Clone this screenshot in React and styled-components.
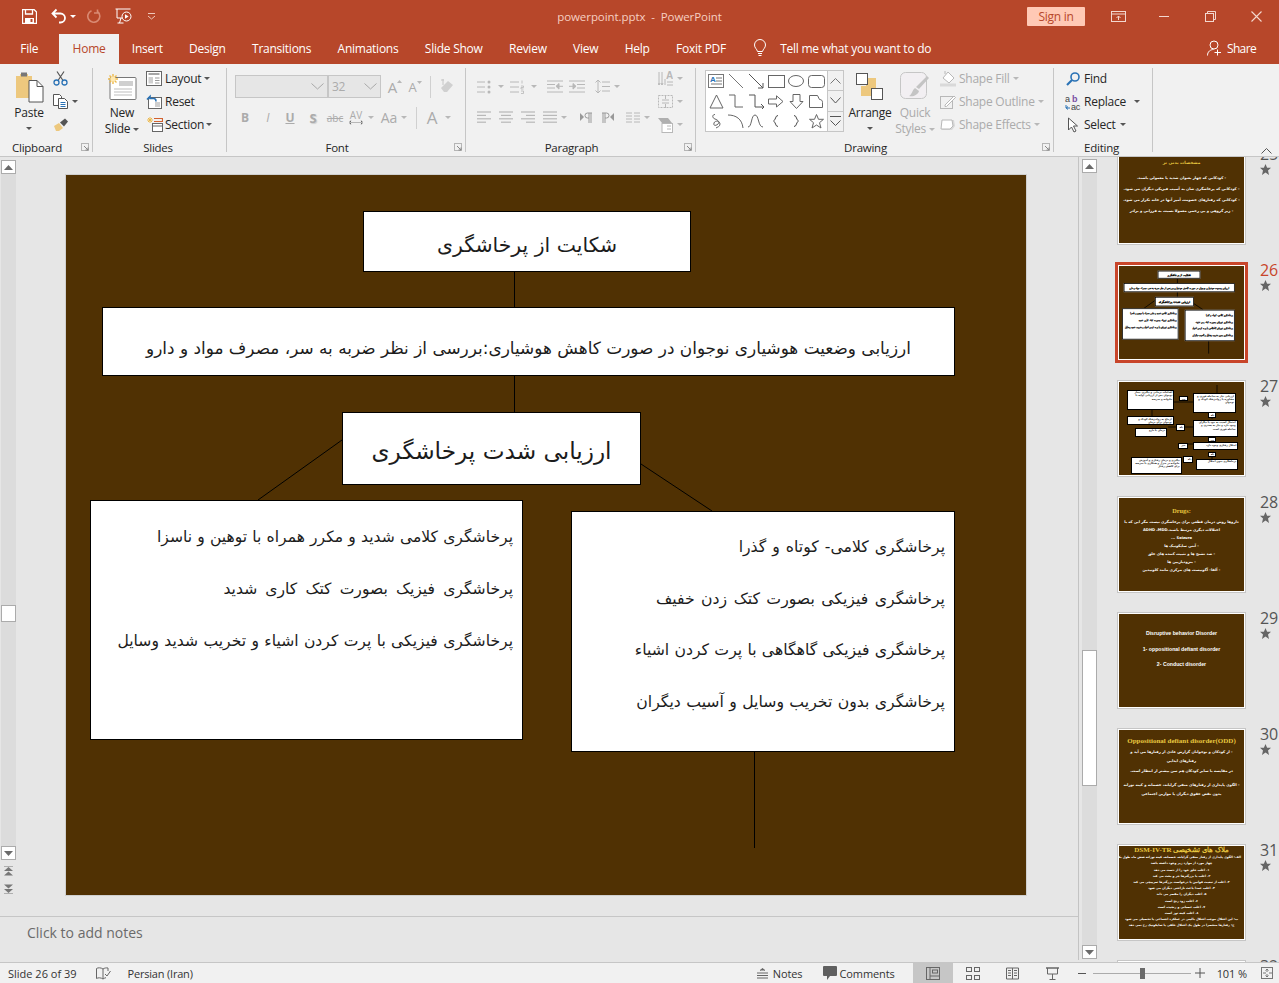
import React from "react";
import styled, { createGlobalStyle } from "styled-components";

const UI = '"Open Sans","Noto Sans",sans-serif';
const FA = '"DejaVu Sans",sans-serif';
const ACCENT = "#B7472A";
const DIS = "#ABABAB";

const Global = createGlobalStyle`
  html,body{margin:0;padding:0;background:#e6e6e6;}
  *{box-sizing:border-box;}
`;

const Window = styled.div`
  width:1279px;height:983px;display:flex;flex-direction:column;overflow:hidden;
  font-family:${UI};font-size:11.5px;color:#262626;letter-spacing:-.25px;
`;
const TitleBar = styled.header`
  height:32px;background:${ACCENT};display:grid;grid-template-columns:1fr auto 1fr;align-items:center;color:#fff;
`;
const Qat = styled.div`display:flex;align-items:center;padding-left:22px;`;
const Caption = styled.div`font-size:11.5px;color:#F6CFC2;white-space:pre;letter-spacing:-.07px;`;
const WinControls = styled.div`display:flex;align-items:center;justify-content:flex-end;padding-right:17px;`;
const SignIn = styled.div`
  width:58px;height:19px;background:#FFC9B5;color:${ACCENT};border-radius:1px;display:flex;align-items:center;justify-content:center;
  font-size:12px;margin-right:26px;
`;
const TabBar = styled.nav`height:32px;background:${ACCENT};display:flex;align-items:flex-end;padding-left:7px;color:#fff;`;
const Tab = styled.div`
  height:30px;padding:0 13.2px 2px;display:flex;align-items:center;white-space:nowrap;font-size:12px;
  ${p=>p.$active?`background:#F1F1F1;color:${ACCENT};`:""}
  &:first-child{margin-right:8px;}
`;
const TellMe = styled.div`display:flex;align-items:center;gap:13px;height:30px;padding:0 0 2px 14px;font-size:12px;`;
const Share = styled.div`margin-left:auto;display:flex;align-items:center;gap:5px;height:30px;padding:0 23px 2px 0;font-size:12px;letter-spacing:-.65px;`;

const Ribbon = styled.section`height:93px;background:#F1F1F1;border-bottom:1px solid #C6C6C6;display:flex;`;
const Group = styled.div`
  width:${p=>p.$w}px;height:84px;margin-top:4px;border-right:1px solid #C6C6C6;display:flex;flex-direction:column;flex:none;
`;
const GroupBody = styled.div`flex:1;display:flex;min-height:0;padding-left:${p=>p.$pl||0}px;`;
const GroupFoot = styled.div`
  height:16px;display:flex;align-items:center;font-size:11.5px;padding-right:3px;margin-bottom:-3px;
`;
const GroupLabel = styled.span`flex:1;text-align:center;`;
const Launcher = styled.span`width:15px;display:flex;justify-content:flex-end;`;
const Big = styled.div`
  width:${p=>p.$w}px;margin-left:${p=>p.$ml||0}px;display:flex;flex-direction:column;align-items:center;flex:none;
  color:${p=>p.$dis?DIS:"#262626"};font-size:12px;line-height:16px;white-space:nowrap;
`;
const BigIcon = styled.div`height:37px;display:flex;align-items:center;justify-content:center;`;
const Stack = styled.div`display:flex;flex-direction:column;margin-left:${p=>p.$ml||0}px;margin-top:-1px;flex:none;`;
const SmallRow = styled.div`
  height:23px;display:flex;align-items:center;gap:${p=>p.$gap??3}px;white-space:nowrap;font-size:12px;
  color:${p=>p.$dis?DIS:"#262626"};
`;
const CtrlRows = styled.div`padding-top:7px;display:flex;flex-direction:column;gap:8px;flex:none;width:${p=>p.$w?p.$w+"px":"auto"};padding-left:${p=>p.$pl||0}px;`;
const CtrlRow = styled.div`height:23px;display:flex;align-items:center;color:${DIS};`;
const Slot = styled.span`
  width:${p=>p.$w}px;margin-left:${p=>p.$ml||0}px;flex:none;display:flex;align-items:center;justify-content:center;
  font-size:${p=>p.$fs||12}px;font-weight:${p=>p.$b?700:400};font-style:${p=>p.$i?"italic":"normal"};
  text-decoration:${p=>p.$u?"underline":p.$st?"line-through":"none"};letter-spacing:0;
  text-shadow:${p=>p.$sh?"1px 1px 1px #cfcfcf":"none"};
`;
const Combo = styled.div`
  width:${p=>p.$w}px;height:23px;background:#E6E6E6;border:1px solid #C6C6C6;display:flex;align-items:center;justify-content:space-between;
  padding:0 3px 0 3px;font-size:12px;color:${DIS};flex:none;margin-right:${p=>p.$mr||0}px;
`;
const VRule = styled.span`width:1px;height:22px;background:#D0D0D0;margin-left:${p=>p.$ml||0}px;flex:none;`;
const Caret = styled.span`
  display:inline-block;flex:none;width:0;height:0;margin-left:${p=>p.$ml||0}px;margin-top:${p=>p.$mt||0}px;vertical-align:middle;
  border-left:3px solid transparent;border-right:3px solid transparent;border-top:3px solid ${p=>p.$c||"#555"};
`;
const Gallery = styled.div`
  margin:2px 0 0 9px;width:139px;height:62px;border:1px solid #C6C6C6;background:#fff;display:flex;flex:none;
`;
const ShapeGrid = styled.div`width:121px;display:grid;grid-template-columns:repeat(6,20px);grid-auto-rows:20px;place-items:center;`;
const GalBtns = styled.div`flex:1;display:flex;flex-direction:column;background:#F1F1F1;border-left:1px solid #C6C6C6;`;
const GalBtn = styled.div`flex:1;display:flex;align-items:center;justify-content:center;border-bottom:1px solid #C6C6C6;&:last-child{border-bottom:0;}`;
const Collapse = styled.div`margin-left:auto;align-self:flex-end;padding:0 7px 2px 0;`;

const Main = styled.main`height:805px;display:flex;background:#E6E6E6;`;
const Editor = styled.div`width:1078px;display:flex;flex-direction:column;flex:none;`;
const EditRow = styled.div`height:759px;display:flex;`;
const ScrollCol = styled.div`
  width:${p=>p.$w}px;margin-left:${p=>p.$ml}px;padding-top:${p=>p.$pt}px;display:flex;flex-direction:column;align-items:stretch;flex:none;
`;
const ScrollBtn = styled.div`height:14px;background:#fff;border:1px solid #ABABAB;display:flex;align-items:center;justify-content:center;flex:none;`;
const Track = styled.div`height:${p=>p.$h}px;background:#DCDCDC;display:flex;flex-direction:column;flex:none;`;
const Gap = styled.div`height:${p=>p.$h}px;flex:none;`;
const ScrollThumb = styled.div`height:${p=>p.$h}px;background:#fff;border:1px solid #ABABAB;flex:none;`;
const NavIcons = styled.div`display:flex;flex-direction:column;align-items:center;gap:8px;padding-top:6px;`;
const Canvas = styled.div`flex:1;padding:17px 0 0 49px;`;
const SlideFrame = styled.div`width:962px;height:722px;border:1px solid #CFCFCF;`;
const SlideFace = styled.div`width:960px;height:720px;background:#503103;position:relative;font-family:${FA};letter-spacing:0;color:#1c1c1c;overflow:hidden;`;
const Lines = styled.svg`position:absolute;left:0;top:0;`;
const Node = styled.div`
  position:absolute;left:${p=>p.$x}px;top:${p=>p.$y}px;width:${p=>p.$w}px;height:${p=>p.$h}px;
  background:#fff;border:1px solid #000;direction:rtl;
  display:flex;flex-direction:column;
  font-size:${p=>p.$fs}px;
  padding:${p=>p.$pad||0};
  align-items:${p=>p.$center?"center":"flex-start"};
  justify-content:${p=>p.$center?"center":"flex-start"};
  white-space:nowrap;
`;
const NodeLine = styled.div`line-height:${p=>p.$lh}px;height:${p=>p.$lh}px;word-spacing:${p=>p.$ws||0}px;`;
const Notes = styled.div`
  height:46px;border-top:1px solid #C6C6C6;padding:6px 0 0 27px;font-size:14px;color:#6A6A6A;letter-spacing:0;
`;
const Divider = styled.div`width:1px;margin-bottom:2px;background:#C3C3C3;flex:none;`;
const ThumbClip = styled.div`flex:1;overflow:hidden;`;
const ThumbPane = styled.aside`display:flex;flex-direction:column;gap:21px;margin-top:-8px;padding-left:21px;`;
const ThumbItem = styled.div`display:flex;height:95px;flex:none;`;
const ThumbFrame = styled.div`
  width:127px;height:95px;border:1px solid #fff;flex:none;background:#503103;overflow:hidden;position:relative;
  box-shadow:0 0 0 ${p=>p.$sel?"3px #C8452A":"1px #C6C6C6"};
`;
const Scaled = styled.div`
  width:960px;height:720px;transform:scale(.1302);transform-origin:0 0;
  & div{-webkit-text-stroke:2.500px #000;}
  & div div{border-width:6px;}
  & path{stroke-width:6;}
`;
const ThumbMeta = styled.div`margin-left:15px;display:flex;flex-direction:column;align-items:flex-start;gap:4px;`;
const ThumbNum = styled.div`font-size:16px;line-height:11px;height:11px;letter-spacing:-.2px;color:${p=>p.$sel?"#C8452A":"#555"};`;
const ThumbBody = styled.div`
  height:100%;display:flex;flex-direction:column;align-items:center;padding:${p=>p.$pad||"4px 5px"};gap:${p=>p.$gap||3}px;
  font-family:${FA};font-size:${p=>p.$fs||3.7}px;line-height:5px;color:#fff;letter-spacing:0;font-weight:700;text-align:center;
`;
const ThumbTitle = styled.div`font-family:"Liberation Serif",serif;font-weight:700;font-size:${p=>p.$fs||6.5}px;line-height:7px;color:#E8C840;white-space:nowrap;margin-bottom:${p=>p.$mb||0}px;`;
const ThumbTitleFa = styled(ThumbTitle)`font-family:${FA};`;
const ThumbLine = styled.div`
  direction:rtl;align-self:stretch;white-space:nowrap;text-align:${p=>p.$left?"right":"center"};
`;
const MiniNode = styled.div`position:absolute;background:#fff;border:.8px solid #000;font:700 2.500px/1.3 ${FA};color:#111;overflow:hidden;direction:rtl;padding:.5px 1px;`;
const LatinLine = styled.div`font-family:"Liberation Sans",sans-serif;font-weight:700;font-size:${p=>p.$fs||5}px;white-space:nowrap;color:#fff;`;
const Status = styled.footer`
  height:21px;background:#F1F1F1;border-top:1px solid #C6C6C6;display:flex;align-items:center;font-size:11px;color:#333;letter-spacing:0;padding-left:8px;
`;
const StatusR = styled.div`margin-left:auto;display:flex;align-items:center;height:100%;letter-spacing:-.1px;`;
const StatusItem = styled.div`display:flex;align-items:center;gap:${p=>p.$gap||5}px;margin-left:${p=>p.$ml||0}px;white-space:nowrap;letter-spacing:${p=>p.$ls??"inherit"};`;
const ViewBtn = styled.div`width:40px;height:20px;display:flex;align-items:center;justify-content:center;background:${p=>p.$on?"#C6C6C6":"transparent"};flex:none;margin-left:${p=>p.$ml||0}px;`;
const Slider = styled.div`width:98px;height:1px;background:#ABABAB;margin:0 4px 0 6px;display:flex;align-items:center;justify-content:center;`;
const SliderKnob = styled.div`width:5px;height:11px;background:#6a6a6a;flex:none;margin-left:2px;`;

/* icon helpers */
const S = ({w,h,children,...r})=><svg width={w} height={h||w} viewBox={`0 0 ${w} ${h||w}`} fill="none" style={{display:"block",flex:"none"}} {...r}>{children}</svg>;
const L="#B8B8B8";

const SaveI=()=><S w={15}><path d="M.5.5h11.5l2.5 2.5v11.5H.5z" stroke="#fff" strokeWidth="1.3"/><path d="M3.5 1v4h7V1" stroke="#fff" strokeWidth="1.3"/><rect x="3" y="9" width="9" height="5.5" fill="#fff"/><rect x="8.5" y="10" width="2" height="3" fill={ACCENT}/></S>;
const UndoI=()=><S w={16}><path d="M5.5 1.5 1.5 5.5l4 4M2 5.5h7.5a4.5 4.5 0 0 1 0 9H8" stroke="#fff" strokeWidth="1.8"/></S>;
const RedoI=()=><S w={14}><path d="M10.5 2.5a6 6 0 1 1-6-.8M10.5 .5v3.5H7" stroke="#D98A73" strokeWidth="1.6"/></S>;
const PresI=()=><S w={17}><path d="M.5 1h15M2 1v9h12" stroke="#fff"/><circle cx="11.5" cy="8.5" r="4.5" fill={ACCENT} stroke="#fff"/><path d="M10 6.2v4.6l3.6-2.3z" fill="#fff"/><path d="M6 10l-1.5 5M2.5 15h6" stroke="#fff"/></S>;
const CustI=()=><S w={9} h={7}><path d="M1 .5h7" stroke="#EFC7BA"/><path d="M1 3l3.5 3L8 3" stroke="#EFC7BA"/></S>;
const RibOptI=()=><S w={15} h={11}><rect x=".5" y=".5" width="14" height="10" stroke="#F3D8CF"/><path d="M.5 3h14" stroke="#F3D8CF"/><path d="M7.5 9V5M5.5 7l2-2 2 2" stroke="#F3D8CF"/></S>;
const MinI=()=><S w={11} h={11}><path d="M0 5.5h10" stroke="#F3D8CF"/></S>;
const ResI=()=><S w={11} h={11}><rect x=".5" y="2.5" width="8" height="8" stroke="#F3D8CF"/><path d="M2.5 2.5v-2h8v8h-2" stroke="#F3D8CF"/></S>;
const CloseI=()=><S w={11} h={11}><path d="M.5.5l10 10M10.5.5l-10 10" stroke="#F3D8CF" strokeWidth="1.1"/></S>;
const BulbI=()=><S w={14} h={18}><path d="M4.5 12.5C4 10 1.5 9 1.5 6a5.5 5.5 0 0 1 11 0c0 3-2.5 4-3 6.5z" stroke="#fff"/><path d="M5 14.5h4M5.5 16.5h3" stroke="#fff"/></S>;
const ShareI=()=><S w={15} h={16}><circle cx="7" cy="5" r="4" stroke="#fff"/><path d="M.5 15.5c0-4 3-6 6-6" stroke="#fff"/><path d="M10.5 9.5v6M7.5 12.5h6.5" stroke="#fff"/></S>;
const PasteI=()=><S w={30} h={32}><path d="M2 5h4V3h8v2h4v22H2z" fill="#EDC87E"/><path d="M7 1.500h6v4H7z" fill="#777"/><path d="M15 9.500h8l6 6v15.500H15z" fill="#fff" stroke="#555"/><path d="M23 9.500v6h6" stroke="#555"/></S>;
const CutI=()=><S w={15}><path d="M4 .5l6 9M11 .5l-6 9" stroke="#555" strokeWidth="1.2"/><circle cx="3.5" cy="11.5" r="2.5" stroke="#2A72B5" strokeWidth="1.3"/><circle cx="11.5" cy="11.5" r="2.5" stroke="#2A72B5" strokeWidth="1.3"/></S>;
const CopyI=()=><S w={15}><path d="M.5.5h6l2 2v9h-8z" fill="#fff" stroke="#555"/><path d="M5.5 4.5h6l3 3v7h-9z" fill="#fff" stroke="#555"/><path d="M7.5 8.5h5M7.5 10.5h5M7.5 12.5h5" stroke="#2A72B5"/></S>;
const BrushI=()=><S w={16} h={15}><path d="M1 9l5-3 4 5-4 3H3z" fill="#EDC87E"/><path d="M7 5.5l5-4 3 3-4 5z" fill="#555"/></S>;
const NewSlideI=()=><S w={30} h={28}><rect x="3" y="4.5" width="26" height="22" rx="1" fill="#fff" stroke="#777"/><rect x="12" y="8" width="14" height="5" fill="#CFCFCF"/><path d="M7 16h18M7 19h18M7 22h18" stroke="#BDBDBD"/><g stroke="#EDB94B" strokeWidth="1.4"><path d="M6 1v10M1 6h10M2.5 2.5l7 7M9.5 2.5l-7 7"/></g><circle cx="6" cy="6" r="2.5" fill="#FFE9B0"/></S>;
const LayoutI=()=><S w={16} h={15}><rect x=".5" y=".5" width="15" height="14" fill="#fff" stroke="#666"/><path d="M2.5 3h11" stroke="#888" strokeWidth="1.5"/><rect x="2.5" y="6" width="4.5" height="6.5" fill="#CFCFCF"/><path d="M9 7h4.5M9 9.5h4.5M9 12h4.5" stroke="#999"/></S>;
const ResetI=()=><S w={16} h={15}><rect x="2.5" y="3.5" width="13" height="11" fill="#fff" stroke="#666"/><rect x="9" y="8" width="5" height="5" fill="#CFCFCF"/><path d="M1 5.5l3-3v2h4.5a3 3 0 0 1 1.5 3" stroke="#2A72B5" strokeWidth="1.6"/></S>;
const SectionI=()=><S w={17} h={15}><path d="M1 3h6M4 0v6M2 1l4 4M6 1L2 5" stroke="#EDB94B"/><path d="M8 1.5h8.5v3H8" stroke="#D2612F" strokeWidth="1.2"/><rect x="6.5" y="6.5" width="10" height="8" fill="#fff" stroke="#666"/><path d="M6.5 9h10" stroke="#666"/></S>;
const Launch=()=><S w={8}><rect x=".5" y=".5" width="7" height="7" stroke="#B5B5B5" fill="none"/><path d="M3 3l4 4M4.5 7H7V4.5" stroke="#888"/></S>;
const Chev=({c="#A8A8A8",w=13})=><S w={w} h={7}><path d={`M.5 .5 ${w/2} 6 ${w-.5} .5`} stroke={c}/></S>;
const Sup = styled.span`display:flex;align-items:flex-start;`;
const SupMark = styled.svg`margin-top:3px;`;
const GrowI=()=><Sup>A<SupMark width="5" height="4"><path d="M0 3l2.5-3L5 3z" fill={L}/></SupMark></Sup>;
const ShrinkI=()=><Sup>A<SupMark width="5" height="4"><path d="M0 0l2.5 3L5 0z" fill={L}/></SupMark></Sup>;
const EraseI=()=><S w={15}><path d="M1 9l7-7 5 4-6 7H4z" fill="#D0D0D0"/><path d="M4 1h-3M3 0v6" stroke="#C6C6C6"/></S>;
const AVStack = styled.span`display:flex;flex-direction:column;align-items:center;line-height:9px;font-size:10px;`;
const AVI=()=><AVStack>AV<svg width="14" height="5"><path d="M0 2.5h14M2 .5l-2 2 2 2M12 .5l2 2-2 2" stroke={L}/></svg></AVStack>;
const Bars=({rows})=><S w={15} h={13}>{rows.map((r,i)=><path key={i} d={`M${r[0]} ${1+i*3.4}h${r[1]}`} stroke={L} strokeWidth="1.2"/>)}</S>;
const BulletI=()=><S w={14} h={14}><path d="M0 2h8M0 7h8M0 12h8" stroke={L}/><circle cx="12" cy="2" r="1.5" fill={L}/><circle cx="12" cy="7" r="1.5" fill={L}/><circle cx="12" cy="12" r="1.5" fill={L}/></S>;
const NumI=()=><S w={14} h={14}><path d="M0 2h9M0 7h9M0 12h9" stroke={L}/><path d="M12 .5v3M11 6h2.5v1.5H11V9h2.5M11 11h2.5v2.5H11" stroke={L} strokeWidth=".8"/></S>;
const IndentI=({rev})=><S w={16} h={13} style={{display:"block",flex:"none",transform:rev?"scaleX(-1)":"none"}}><path d="M0 1h16M8 4.5h8M8 8h8M0 12h16" stroke={L}/><path d="M0 6.3h5M4 3.5l3 2.8-3 2.8z" stroke={L} fill={L}/></S>;
const SpacingI=()=><S w={15} h={15}><path d="M3 1v13M.5 3.5 3 1l2.5 2.5M.5 11.5 3 14l2.5-2.5" stroke={L}/><path d="M7 3h8M7 7.5h8M7 12h8" stroke={L}/></S>;
const PilcrowI=({rev})=><S w={12} h={11} style={{display:"block",flex:"none",transform:rev?"scaleX(-1)":"none"}}><path d="M0 1v8l4-4z" fill="#999"/><path d="M9 1v10M11 1v10M7.5 1H12M7.5 1a2.5 2.5 0 0 0 0 5H9" stroke="#999"/></S>;
const ColsI=()=><S w={14} h={11}><path d="M0 1h6M0 4h6M0 7h6M0 10h6M8 1h6M8 4h6M8 7h6M8 10h6" stroke={L}/></S>;
const DirI=()=><S w={15} h={16}><text x="8" y="8" fontSize="10" fill={L} fontFamily="Liberation Sans" fontWeight="700">A</text><path d="M1 1v13M4 1v13M7 8v6M0 12l1 2 1-2M3 12l1 2 1-2" stroke={L}/><path d="M9 11h6M9 14h6" stroke={L}/></S>;
const AlignI=()=><S w={15} h={15}><rect x=".5" y="1.5" width="14" height="12" stroke={L} strokeDasharray="2 1"/><path d="M4 6h7M4 9h7M7.5 1v4M7.5 10v4" stroke={L}/></S>;
const SmartI=()=><S w={15} h={16}><path d="M0 1h10l4 5H4z" fill="#AFAFAF"/><rect x="4" y="6.5" width="10.5" height="9" fill="#fff" stroke={L}/><path d="M9 9h4M9 12h4" stroke={L}/></S>;
const ArrangeI=()=><S w={28} h={28}><rect x="10" y="5" width="10" height="10" fill="#EDC87E"/><rect x="5" y="13" width="10" height="10" fill="#EDC87E"/><rect x=".5" y=".5" width="11" height="11" fill="#fff" stroke="#555"/><rect x="15.5" y="15.5" width="11" height="11" fill="#fff" stroke="#555"/></S>;
const QuickI=()=><S w={30}><rect x=".5" y=".5" width="26" height="26" rx="5" fill="#F2EFF2" stroke="#C6C6C6"/><path d="M29 6 19 17l-3-2 11-11zM15 16l4 3c-1 4-6 6-10 5 3-1 3-6 6-8z" fill="#C4C4C4"/></S>;
const FillI=()=><S w={16}><path d="M8 1l6 6-5 5-6-5z" stroke={L} fill="#fff"/><path d="M5 3V0" stroke={L}/><path d="M0 14h16" stroke="#D9D9D9" strokeWidth="3"/></S>;
const OutlineI=()=><S w={16}><rect x=".5" y="2.5" width="12" height="12" stroke={L}/><path d="M5 11l9-9 1.5 1.5-9 9H5z" fill="#fff" stroke={L}/></S>;
const EffectI=()=><S w={16}><path d="M3 3h11l1 6-3 4H2z" fill="#D8D8D8"/><path d="M2 3h10l1 6-3 3H1z" fill="#fff" stroke={L}/></S>;
const FindI=()=><S w={14}><circle cx="9" cy="5" r="4" stroke="#2A72B5" strokeWidth="1.6"/><path d="M6 8l-5 5" stroke="#2A72B5" strokeWidth="2.2"/></S>;
const ReplaceI=()=><svg width="17" height="16" style={{display:"block",flex:"none"}} fontFamily="Liberation Sans" fontSize="9"><text x="0" y="7.500" fill="#444">a</text><text x="7" y="7.500" fill="#7A4FA3" fontWeight="700">b</text><text x="6" y="15.500" fill="#444">ac</text><path d="M1 11v3h4M3 12.5 1.2 14 3 15.5" stroke="#2A72B5" fill="none"/></svg>;
const SelectI=()=><S w={14} h={16}><path d="M2.5 1v12l3-3 2.5 5 2-1-2.5-5h4z" fill="#fff" stroke="#555"/></S>;
const ChevUp=()=><S w={11} h={6}><path d="M.5 5.5l5-5 5 5" stroke="#777"/></S>;
const StarI=()=><S w={11}><path d="M5.500 0l1.600 3.800H11L8 6.400 9 11 5.500 8.500 2 11l1-4.600L0 3.800h3.900z" fill="#666"/></S>;
const Tri=({up})=><S w={9} h={5}><path d={up?"M0 5l4.5-5L9 5z":"M0 0l4.5 5L9 0z"} fill="#6a6a6a"/></S>;
const PrevI=({down})=><S w={9} h={10} style={{display:"block",transform:down?"scaleY(-1)":"none"}}><path d="M0 0h9" stroke="#777"/><path d="M0 5l4.5-4L9 5zM0 9.5l4.5-4 4.5 4z" fill="#777"/></S>;
const ProofI=()=><S w={15} h={13}><path d="M7 2C5 .5 2 .5.5 1.5v10C2 10.5 5 10.5 7 12c1-.7 2-1.1 3-1.3M7 2v10" stroke="#666"/><path d="M7 2c1.5-1.1 3.5-1.3 5-1v3" stroke="#666"/><path d="M9 7l2 2 3.5-5" stroke="#666"/></S>;
const NotesI=()=><S w={11}><path d="M3 2.5 5.5.5 8 2.5" fill="#666" stroke="#666"/><path d="M0 5h11M0 7.5h11M0 10h11" stroke="#666"/></S>;
const CommentI=()=><S w={14} h={14}><path d="M1 0h12a1 1 0 0 1 1 1v8a1 1 0 0 1-1 1H7l-3 4v-4H1a1 1 0 0 1-1-1V1a1 1 0 0 1 1-1z" fill="#5f5f5f"/></S>;
const NormalV=()=><S w={14} h={13}><rect x=".5" y=".5" width="13" height="12" stroke="#666"/><path d="M4 .5v12M4 9h9.5" stroke="#666"/><rect x="6.5" y="3" width="5" height="3" stroke="#666"/></S>;
const GridV=()=><S w={14} h={13}><rect x=".5" y=".5" width="5" height="4" stroke="#666"/><rect x="8.5" y=".5" width="5" height="4" stroke="#666"/><rect x=".5" y="8.5" width="5" height="4" stroke="#666"/><rect x="8.5" y="8.5" width="5" height="4" stroke="#666"/></S>;
const ReadV=()=><S w={13} h={13}><path d="M.5 1h12v11H.5zM6.5 1v11M2 3.5h3M2 6h3M2 8.5h3M8 3.5h3M8 6h3M8 8.5h3" stroke="#666"/></S>;
const ShowV=()=><S w={13} h={13}><path d="M0 1h13" stroke="#666" strokeWidth="1.5"/><path d="M1.5 1v6h10V1M6.5 7v5M3.5 12.5h6" stroke="#666"/></S>;
const FitV=()=><S w={12} h={12}><rect x=".5" y=".5" width="11" height="11" stroke="#777"/><path d="M6 2v3M4.5 3.5 6 2l1.5 1.5M6 10V7M4.5 8.5 6 10l1.5-1.5M2 6h3M8 6h3" stroke="#777"/></S>;

/* gallery shapes */
const shapes=[
 <svg width="16" height="14" key="0"><rect x=".5" y=".5" width="15" height="13" stroke="#777" fill="#fff"/><text x="2" y="8" fontSize="8" fontWeight="700" fill="#2A72B5" fontFamily="Liberation Sans">A</text><path d="M8 4h6M8 7h6M3 10h11" stroke="#777"/></svg>,
 <S w={15} key="1"><path d="M0 0l14 14" stroke="#777"/></S>,
 <S w={15} key="2"><path d="M0 0l14 14M14 9v5H9" stroke="#555"/></S>,
 <S w={17} h={13} key="3"><rect x=".5" y=".5" width="16" height="12" stroke="#666"/></S>,
 <S w={16} h={12} key="4"><ellipse cx="8" cy="6" rx="7.5" ry="5.5" stroke="#666"/></S>,
 <S w={17} h={13} key="5"><rect x=".5" y=".5" width="16" height="12" rx="3" stroke="#666"/></S>,
 <S w={15} key="6"><path d="M7.500 1 14 14H1z" stroke="#666"/></S>,
 <S w={16} h={14} key="7"><path d="M1 1h6v12h8" stroke="#666"/></S>,
 <S w={17} h={15} key="8"><path d="M1 1h6v12h9M13 10l3 3-3 3" stroke="#555"/></S>,
 <S w={16} h={13} key="9"><path d="M.5 4h8V.8L15 6.500 8.500 12V9H.5z" stroke="#666"/></S>,
 <S w={15} key="10"><path d="M4 .5h7v7h3l-6.500 7L1 7.500h3z" stroke="#666"/></S>,
 <S w={14} h={13} key="11"><path d="M.5.5h8l2 4c2 0 3 1 3 3v5H.5z" stroke="#666"/></S>,
 <S w={11} h={15} key="12"><path d="M4 .5C1 .5 1 4 4 5s5 3 3 5-5 2-4-1 6-2 6 1-3 3-4 4" stroke="#666"/></S>,
 <S w={16} h={14} key="13"><path d="M0 1c8 0 14 4 15 13" stroke="#666"/></S>,
 <S w={16} h={14} key="14"><path d="M0 13c4 0 3-12 7-12s3 12 8 12" stroke="#666"/></S>,
 <S w={6} h={12} key="15"><path d="M5 .5C2 .5 3 5 .5 6 3 7 2 11.500 5 11.500" stroke="#444"/></S>,
 <S w={6} h={12} key="16"><path d="M1 .5C4 .5 3 5 5.500 6 3 7 4 11.500 1 11.500" stroke="#444"/></S>,
 <S w={15} key="17"><path d="M7.500 .5l2 4.800h5l-4 3.400 1.500 5.300-4.500-3-4.500 3 1.500-5.300-4-3.400h5z" stroke="#666"/></S>,
];

/* slide */
const diagram=[
 {x:297,y:36,w:328,h:61,fs:20.4,center:true,pad:"7px 0 0",t:["شکایت از پرخاشگری"]},
 {x:36,y:132,w:853,h:69,fs:16.9,center:true,pad:"12px 0 0",t:["ارزیابی وضعیت هوشیاری نوجوان در صورت کاهش هوشیاری:بررسی از نظر ضربه به سر، مصرف مواد و دارو"]},
 {x:276,y:237,w:299,h:73,fs:23.2,center:true,pad:"3px 0 0",t:["ارزیابی شدت پرخاشگری"]},
 {x:24,y:325,w:433,h:240,fs:15.6,pad:"10px 9px 0 0",lh:52,ws:[.2,3.2,.4],t:["پرخاشگری کلامی شدید و مکرر همراه با توهین و ناسزا","پرخاشگری فیزیک بصورت کتک کاری شدید","پرخاشگری فیزیکی با پرت کردن اشیاء و تخریب شدید وسایل"]},
 {x:505,y:336,w:384,h:241,fs:15.7,pad:"9px 9px 0 0",lh:51.7,ws:[1,1.5,.3,.4],t:["پرخاشگری کلامی- کوتاه و گذرا","پرخاشگری فیزیکی بصورت کتک زدن خفیف","پرخاشگری فیزیکی گاهگاهی با پرت کردن اشیاء","پرخاشگری بدون تخریب وسایل و آسیب دیگران"]},
];
const Diagram=()=>(
 <SlideFace>
  <Lines width="960" height="720">
   <path d="M448.500 96V132M448.500 201V237M276 265 192 325M575 289 646 336M688.500 577V673" stroke="#000" fill="none"/>
  </Lines>
  {diagram.map((n,i)=>(
   <Node key={i} $x={n.x} $y={n.y} $w={n.w} $h={n.h} $fs={n.fs} $center={n.center} $pad={n.pad}>
    {n.t.map((l,j)=>n.lh?<NodeLine key={j} $lh={n.lh} $ws={n.ws[j]}>{l}</NodeLine>:<div key={j}>{l}</div>)}
   </Node>
  ))}
 </SlideFace>
);

const mini=[
 [157,718,298,778,"اقدامات درمانی و پیگیری بیمار نوجوان پس از ارزیابی اولیه با خانواده و مدرسه"],
 [355,728,483,787,"ارزیابی نیاز به مداخله فوری و مشاوره با روانپزشک کودک و نوجوان"],
 [313,737,338,752,"خیر"],[398,786,424,803,"بله"],
 [157,798,296,825,"ارجاع به روانپزشک کودک و نوجوان برای درمان"],
 [355,808,488,860,"احتمال آسیب به خود یا دیگران وجود دارد و نیاز به بستری و مداخله فوری است"],
 [180,832,276,860,"درمان با دارو"],[302,822,330,842,"بله"],[398,860,424,874,"خیر"],[310,877,338,896,"خیر"],
 [355,876,490,900,"اختلال رفتاری وجود دارد"],[398,904,424,920,"بله"],[325,918,355,938,"بله"],
 [362,925,490,958,"پرخاشگری بدون اختلال"],
 [168,920,320,970,"پیگیری و درمان رفتاری و آموزش خانواده در منزل و همکاری با مدرسه برای کاهش رفتار"]];
const MiniLines = styled.svg`position:absolute;left:0;top:0;`;
const Thumb27=()=>(<>
 <MiniLines width="125" height="93"><path d="M98 3v8M75 20H55M33 27v7M93 30v7M75 45H49M93 55v7M93 70v8M75 62H62" stroke="#000" strokeWidth=".8" fill="none"/></MiniLines>
 {mini.map((m,i)=><MiniNode key={i} style={{left:(m[0]-132)/3,top:(m[1]-695)/3,width:(m[2]-m[0])/3,height:(m[3]-m[1])/3}}>{m[4]}</MiniNode>)}
</>);

const thumbs=[
 {n:25,c:<ThumbBody $pad="9px 4px" $gap={6}><ThumbTitleFa $fs={4.300} $mb={4}>مشخصات بدنی تر</ThumbTitleFa>
   <ThumbLine>- کودکانی که چهار بعنوان شدید یا معمولی باشند.</ThumbLine><ThumbLine>- کودکانی که پرخاشگری شان به آسیب فیزیکی دیگران می شود.</ThumbLine><ThumbLine>- کودکانی که رفتارهای خصومت آمیز آنها در خانه تکرار می شود.</ThumbLine><ThumbLine>- زیر گروهی و بی رحمی معمولا نسبت به فرزانی و برادر</ThumbLine></ThumbBody>},
 {n:26,sel:true,c:<Scaled><Diagram/></Scaled>},
 {n:27,c:<Thumb27/>},
 {n:28,c:<ThumbBody $pad="9px 5px 0" $gap={3}><ThumbTitle $fs={6.300} $mb={3}>Drugs:</ThumbTitle><ThumbLine>داروها روش درمان قطعی برای پرخاشگری نیست مگر این که با</ThumbLine><ThumbLine>اختلالات دیگری مرتبط باشند.ADHD ،MDD</ThumbLine><ThumbLine>Seizure ...</ThumbLine><ThumbLine>- آنتی سایکوتیک ها</ThumbLine><ThumbLine>- ضد تشنج ها و تثبیت کننده های خلق</ThumbLine><ThumbLine>- بنزودیازپین ها</ThumbLine><ThumbLine>- آلفا- آگونیست های مرکزی مانند کلونیدین</ThumbLine></ThumbBody>},
 {n:29,c:<ThumbBody $pad="17px 5px 0" $gap={10.500}><LatinLine $fs={5.200}>Disruptive behavior Disorder</LatinLine><LatinLine $fs={5.200}>1- oppositional defiant disorder</LatinLine><LatinLine $fs={5.200}>2- Conduct disorder</LatinLine></ThumbBody>},
 {n:30,c:<ThumbBody $pad="8px 4px 0" $gap={4.500}><ThumbTitle $fs={7}>Oppositional defiant disorder(ODD)</ThumbTitle><ThumbLine>- از کودکان و نوجوانان گزارش عادی از رفتارها می آید و</ThumbLine><ThumbLine>رفتارهای ایذایی</ThumbLine><ThumbLine>در مقایسه با سایر کودکان هم سن بیشتر از انتظار است.</ThumbLine><ThumbLine> </ThumbLine><ThumbLine>- الگوی پایداری از رفتارهای منفی گرایانه، خصمانه و کینه توزانه</ThumbLine><ThumbLine>بدون نقض حقوق دیگران یا موازین اجتماعی</ThumbLine></ThumbBody>},
 {n:31,c:<ThumbBody $pad="1px 3px" $gap={1.200} $fs={3.100}><ThumbTitle $fs={7}>DSM-IV-TR ملاک های تشخیصی</ThumbTitle>
   {["الف: الگوی پایداری از رفتار منفی گرایانه، خصمانه، کینه توزانه شش ماه طول بکشد","چهار مورد از موارد زیر وجود داشته باشد","۱. اغلب خلق خود را از دست می دهد","۲. اغلب با بزرگترها جر و بحث می کند","۳. اغلب از تبعیت قوانین یا درخواست بزرگترها سرپیچی می کند","۴. اغلب عمدا باعث ناراحتی دیگران می شود","۵. اغلب دیگران را مقصر می داند","۶. اغلب زود رنج است","۷. اغلب عصبانی و رنجیده است","۸. اغلب کینه توز است","ب: این اختلال موجب اختلال بالینی در عملکرد اجتماعی یا تحصیلی می شود","ج: رفتارها منحصرا در طول یک اختلال خلقی یا سایکوتیک رخ نمی دهد"].map((l,i)=><ThumbLine key={i}>{l}</ThumbLine>)}</ThumbBody>},
 {n:32,c:null},
];

const FOOT=({label,launch})=><GroupFoot><GroupLabel>{label}</GroupLabel>{launch?<Launcher><Launch/></Launcher>:null}</GroupFoot>;

export default function App(){
 return <Window>
  <Global/>
  <TitleBar>
   <Qat>
    <SaveI/>
    <Slot $w={16} $ml={14}><UndoI/></Slot><Slot $w={11} $ml={0}><Caret $c="#fff"/></Slot>
    <Slot $w={14} $ml={9}><RedoI/></Slot>
    <Slot $w={17} $ml={14}><PresI/></Slot>
    <Slot $w={9} $ml={15}><CustI/></Slot>
   </Qat>
   <Caption>powerpoint.pptx  -  PowerPoint</Caption>
   <WinControls>
    <SignIn>Sign in</SignIn>
    <RibOptI/><Slot $w={11} $ml={33}><MinI/></Slot><Slot $w={11} $ml={35}><ResI/></Slot><Slot $w={11} $ml={35}><CloseI/></Slot>
   </WinControls>
  </TitleBar>
  <TabBar>
   {["File","Home","Insert","Design","Transitions","Animations","Slide Show","Review","View","Help","Foxit PDF"].map(t=><Tab key={t} $active={t==="Home"}>{t}</Tab>)}
   <TellMe><BulbI/>Tell me what you want to do</TellMe>
   <Share><ShareI/>Share</Share>
  </TabBar>
  <Ribbon>
   <Group $w={93}>
    <GroupBody $pl={7}>
     <Big $w={44}><BigIcon><PasteI/></BigIcon>Paste<Caret $mt={6}/></Big>
     <Stack $ml={2}>
      <SmallRow><CutI/></SmallRow>
      <SmallRow><CopyI/><Caret $ml={1}/></SmallRow>
      <SmallRow><BrushI/></SmallRow>
     </Stack>
    </GroupBody>
    <FOOT label="Clipboard" launch/>
   </Group>
   <Group $w={134}>
    <GroupBody $pl={7}>
     <Big $w={44}><BigIcon><NewSlideI/></BigIcon>New<span>Slide <Caret/></span></Big>
     <Stack $ml={2}>
      <SmallRow><LayoutI/>Layout <Caret/></SmallRow>
      <SmallRow><ResetI/>Reset</SmallRow>
      <SmallRow $gap={2}><SectionI/>Section <Caret/></SmallRow>
     </Stack>
    </GroupBody>
    <FOOT label="Slides"/>
   </Group>
   <Group $w={239}>
    <GroupBody>
     <CtrlRows $pl={8}>
      <CtrlRow>
       <Combo $w={93}><span/><Chev/></Combo><Combo $w={53}>32<Chev/></Combo>
       <Slot $w={18} $ml={5} $fs={15}><GrowI/></Slot><Slot $w={16} $ml={3} $fs={13}><ShrinkI/></Slot>
       <VRule $ml={7}/><Slot $w={15} $ml={9}><EraseI/></Slot>
      </CtrlRow>
      <CtrlRow>
       <Slot $w={20} $ml={0} $b $fs={12}>B</Slot><Slot $w={22} $ml={2} $i $fs={12}>I</Slot><Slot $w={22} $u $b $fs={12}>U</Slot>
       <Slot $w={22} $ml={1} $b $sh $fs={13}>S</Slot><Slot $w={22} $st $fs={10}>abc</Slot><Slot $w={20}><AVI/></Slot><Slot $w={10}><Caret $c={L}/></Slot>
       <Slot $w={20} $ml={3} $fs={14}>Aa</Slot><Slot $w={10}><Caret $c={L}/></Slot>
       <VRule $ml={7}/><Slot $w={20} $ml={5} $fs={17}>A</Slot><Slot $w={10} $ml={1}><Caret $c={L}/></Slot>
      </CtrlRow>
     </CtrlRows>
    </GroupBody>
    <FOOT label="Font" launch/>
   </Group>
   <Group $w={230}>
    <GroupBody>
     <CtrlRows $pl={11} $w={188}>
      <CtrlRow>
       <Slot $w={14}><BulletI/></Slot><Slot $w={19}><Caret $c={L}/></Slot><Slot $w={14}><NumI/></Slot><Slot $w={20}><Caret $c={L}/></Slot>
       <Slot $w={16} $ml={3}><IndentI rev/></Slot><Slot $w={16} $ml={6}><IndentI/></Slot><Slot $w={15} $ml={10}><SpacingI/></Slot><Slot $w={14}><Caret $c={L}/></Slot>
      </CtrlRow>
      <CtrlRow>
       <Slot $w={14}><Bars rows={[[0,14],[0,9],[0,14],[0,9]]}/></Slot><Slot $w={14} $ml={8}><Bars rows={[[0,14],[2,10],[0,14],[2,10]]}/></Slot>
       <Slot $w={14} $ml={8}><Bars rows={[[0,14],[5,9],[0,14],[5,9]]}/></Slot><Slot $w={14} $ml={8}><Bars rows={[[0,14],[0,14],[0,14],[0,14]]}/></Slot><Slot $w={14}><Caret $c={L}/></Slot>
       <Slot $w={12} $ml={9}><PilcrowI/></Slot><Slot $w={12} $ml={10}><PilcrowI rev/></Slot><Slot $w={14} $ml={12}><ColsI/></Slot><Slot $w={14}><Caret $c={L}/></Slot>
      </CtrlRow>
     </CtrlRows>
     <Stack>
      <SmallRow $gap={0}><Slot $w={15} $ml={4}><DirI/></Slot><Slot $w={14}><Caret $c={L}/></Slot></SmallRow>
      <SmallRow $gap={0}><Slot $w={15} $ml={4}><AlignI/></Slot><Slot $w={14}><Caret $c={L}/></Slot></SmallRow>
      <SmallRow $gap={0}><Slot $w={15} $ml={4}><SmartI/></Slot><Slot $w={14}><Caret $c={L}/></Slot></SmallRow>
     </Stack>
    </GroupBody>
    <FOOT label="Paragraph" launch/>
   </Group>
   <Group $w={358}>
    <GroupBody>
     <Gallery>
      <ShapeGrid>{shapes}</ShapeGrid>
      <GalBtns>
       <GalBtn><ChevUp/></GalBtn>
       <GalBtn><Chev c="#555" w={11}/></GalBtn>
       <GalBtn><S w={11} h={11}><path d="M0 .5h11" stroke="#555"/><path d="M.5 4.500l5 5 5-5" stroke="#555"/></S></GalBtn>
      </GalBtns>
     </Gallery>
     <Big $w={42} $ml={5}><BigIcon><ArrangeI/></BigIcon>Arrange<Caret $mt={6}/></Big>
     <Big $w={44} $ml={2} $dis><BigIcon><QuickI/></BigIcon>Quick<span>Styles <Caret $c={L}/></span></Big>
     <Stack $ml={3}>
      <SmallRow $dis><FillI/>Shape Fill <Caret $c={L}/></SmallRow>
      <SmallRow $dis><OutlineI/>Shape Outline <Caret $c={L}/></SmallRow>
      <SmallRow $dis><EffectI/>Shape Effects <Caret $c={L}/></SmallRow>
     </Stack>
    </GroupBody>
    <FOOT label="Drawing" launch/>
   </Group>
   <Group $w={99}>
    <GroupBody $pl={11}>
     <Stack>
      <SmallRow $gap={4}><Slot $w={14} $ml={1}><FindI/></Slot>Find</SmallRow>
      <SmallRow $gap={2}><ReplaceI/>Replace<Caret $ml={6}/></SmallRow>
      <SmallRow $gap={4}><Slot $w={14} $ml={1}><SelectI/></Slot>Select <Caret/></SmallRow>
     </Stack>
    </GroupBody>
    <FOOT label="Editing"/>
   </Group>
   <Collapse><S w={11} h={6}><path d="M.5 5.500l5-5 5 5" stroke="#555"/></S></Collapse>
  </Ribbon>
  <Main>
   <Editor>
    <EditRow>
     <ScrollCol $w={15} $ml={1} $pt={3}>
      <ScrollBtn><Tri up/></ScrollBtn>
      <Track $h={672}><Gap $h={431}/><ScrollThumb $h={17}/></Track>
      <ScrollBtn><Tri/></ScrollBtn>
      <NavIcons><PrevI/><PrevI down/></NavIcons>
     </ScrollCol>
     <Canvas><SlideFrame><Diagram/></SlideFrame></Canvas>
    </EditRow>
    <Notes>Click to add notes</Notes>
   </Editor>
   <Divider/>
   <ScrollCol $w={15} $ml={3} $pt={2}>
    <ScrollBtn><Tri up/></ScrollBtn>
    <Track $h={772}><Gap $h={477}/><ScrollThumb $h={136}/></Track>
    <ScrollBtn><Tri/></ScrollBtn>
   </ScrollCol>
   <ThumbClip>
    <ThumbPane>
     {thumbs.map(t=><ThumbItem key={t.n}>
       <ThumbFrame $sel={t.sel}>{t.c}</ThumbFrame>
       <ThumbMeta><ThumbNum $sel={t.sel}>{t.n}</ThumbNum><StarI/></ThumbMeta>
     </ThumbItem>)}
    </ThumbPane>
   </ThumbClip>
  </Main>
  <Status>
   <StatusItem>Slide 26 of 39</StatusItem>
   <StatusItem $ml={19}><ProofI/></StatusItem>
   <StatusItem $ml={17} $ls="-.2px">Persian (Iran)</StatusItem>
   <StatusR>
    <StatusItem><NotesI/>Notes</StatusItem>
    <StatusItem $ml={21} $gap={2}><CommentI/>Comments</StatusItem>
    <ViewBtn $on $ml={18}><NormalV/></ViewBtn><ViewBtn><GridV/></ViewBtn><ViewBtn><ReadV/></ViewBtn><ViewBtn><ShowV/></ViewBtn>
    <StatusItem $ml={4}><S w={10} h={3}><path d="M1 1.500h8" stroke="#555"/></S></StatusItem>
    <Slider><SliderKnob/></Slider>
    <S w={10}><path d="M0 5h10M5 0v10" stroke="#555"/></S>
    <StatusItem $ml={12}>101 %</StatusItem>
    <StatusItem $ml={14}><FitV/></StatusItem>
    <StatusItem $ml={6}/>
   </StatusR>
  </Status>
 </Window>;
}
